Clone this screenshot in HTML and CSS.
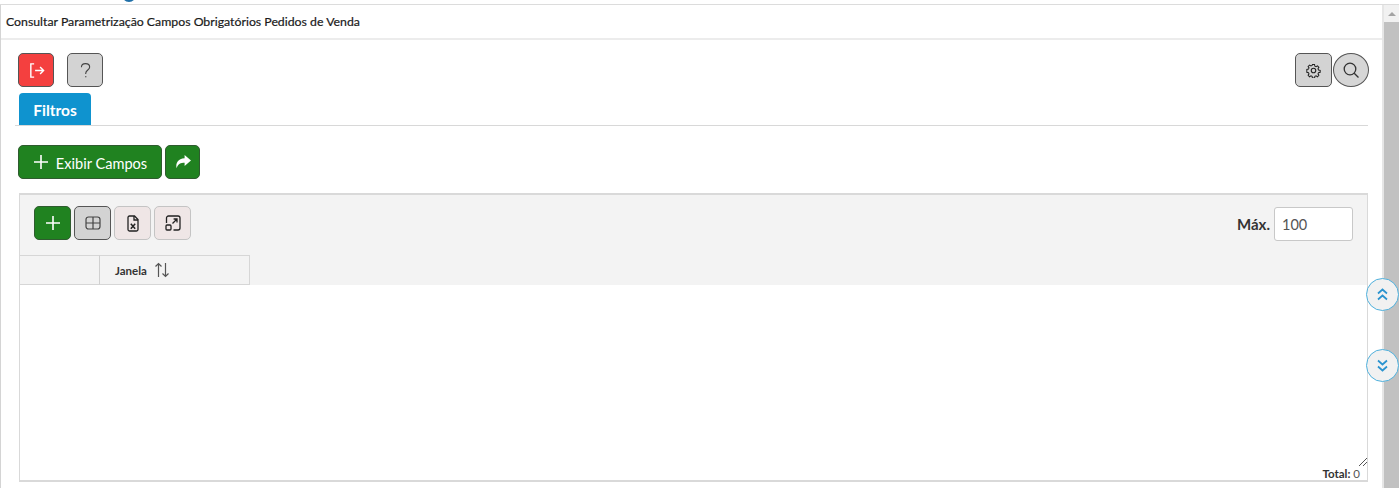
FILE: index.html
```html
<!DOCTYPE html>
<html lang="pt-BR">
<head>
  <meta charset="UTF-8">
  <title>Consultar Parametrização Campos Obrigatórios Pedidos de Venda</title>
  <link rel="stylesheet" href="styles.css">
</head>
<body>

<div class="page">
  <div class="top-strip"><span class="logo-arc"></span></div>
  <div class="shell">
    <div class="window">
      <div class="title-bar">Consultar Parametrização Campos Obrigatórios Pedidos de Venda</div>
      <div class="content">
        <div class="toolbar">
          <button class="btn btn-red" type="button">
            <svg width="17" height="17" viewBox="0 0 18 18" fill="none" stroke="currentColor" stroke-width="1.500"><path d="M6.500 2H3v14h3.500"/><path d="M7.500 9h9M12.800 5.300 16.500 9l-3.700 3.700"/></svg>
          </button>
          <button class="btn btn-gray" type="button">
            <svg width="11" height="17" viewBox="0 0 14 20" fill="none" stroke="#444" stroke-width="1.400"><path d="M1.800 6C1.800 3 4 1.200 7 1.200c3.200 0 5.300 2 5.300 4.500 0 3.600-5 3.700-5 7.800v1"/><path d="M7.300 17.200v1.500" stroke-width="1.700"/></svg>
          </button>
          <div class="toolbar-right">
            <button class="btn btn-gray btn-gear" type="button">
              <svg width="15" height="15" viewBox="0 0 16 16" fill="none" stroke="#222" stroke-width="1.200"><circle cx="8" cy="8" r="2.400"/><path d="M6.800 1.200h2.400l.4 1.900 1.300.6 1.700-1 1.600 1.700-1 1.600.6 1.400 1.900.4v2.300l-1.900.4-.6 1.400 1 1.600-1.600 1.700-1.700-1-1.300.6-.4 1.900H6.800l-.4-1.900-1.300-.6-1.700 1-1.600-1.700 1-1.600-.6-1.400-1.900-.4V6.800l1.900-.4.600-1.400-1-1.600 1.600-1.700 1.700 1 1.300-.6z" transform="translate(.6 .6) scale(.925)"/></svg>
            </button>
            <button class="btn btn-gray btn-round" type="button">
              <svg width="18" height="18" viewBox="0 0 18 18" fill="none" stroke="#333" stroke-width="1.300"><circle cx="8" cy="8" r="5.800"/><path d="m12.200 12.200 4.300 4.300"/></svg>
            </button>
          </div>
        </div>

        <div class="tabs">
          <div class="tab-active">Filtros</div>
        </div>

        <div class="actions">
          <button class="btn btn-green btn-show" type="button">
            <svg width="16" height="16" viewBox="0 0 16 16" stroke="currentColor" stroke-width="1.600"><path d="M8 1v14M1 8h14"/></svg>
            <span class="btn-label">Exibir Campos</span>
          </button>
          <button class="btn btn-green btn-share" type="button">
            <svg width="16" height="14" viewBox="0 0 16 14" fill="currentColor"><path d="M9.600 0 16 5.400l-6.400 5.500V7.700C5.800 7.700 3 8.600 1.600 13.200.4 8 3 3.600 9.600 3.200z"/></svg>
          </button>
        </div>

        <div class="grid-panel">
          <div class="grid-head">
            <div class="grid-tools">
              <button class="btn btn-green" type="button">
                <svg width="16" height="16" viewBox="0 0 16 16" stroke="currentColor" stroke-width="1.600"><path d="M8 1v14M1 8h14"/></svg>
              </button>
              <button class="btn btn-gray" type="button">
                <svg width="16" height="14" viewBox="0 0 16 14" fill="none" stroke="#444" stroke-width="1.200"><rect x="1" y="1" width="14" height="12" rx="2.500"/><path d="M8 1v12M1 7h14"/></svg>
              </button>
              <button class="btn btn-light" type="button">
                <svg width="12" height="17" viewBox="0 0 12 17" fill="none" stroke="#222" stroke-width="1.300"><path d="M7.500 1H2.500A1.500 1.500 0 0 0 1 2.500v12A1.500 1.500 0 0 0 2.500 16h7a1.500 1.500 0 0 0 1.500-1.500V4.500z"/><path d="M7 1v4h4"/><path d="m3.800 8.800 4.400 5M8.200 8.800l-4.400 5" stroke-width="1.500"/></svg>
              </button>
              <button class="btn btn-light" type="button">
                <svg width="16" height="16" viewBox="0 0 16 16" fill="none" stroke="#222" stroke-width="1.300"><path d="M1.500 8V3A2 2 0 0 1 3.500 1h9.500a2 2 0 0 1 2 2v10a2 2 0 0 1-2 2H8.500"/><rect x="1" y="10" width="5" height="5" rx="1"/><path d="M7.500 8.500 12 4M8.600 4H12v3.400"/></svg>
              </button>
              <div class="max-box">
                <label class="max-label" for="maxRows">Máx.</label>
                <input class="max-input" type="text" id="maxRows" value="100">
              </div>
            </div>
            <div class="grid-columns">
              <div class="col-empty"></div>
              <div class="col-title">
                Janela
                <svg width="16" height="16" viewBox="0 0 16 16" fill="none" stroke="#555" stroke-width="1.200"><path d="M4.500 15V1.500M1.500 4.500l3-3 3 3M11.500 1v13.500M8.500 11.500l3 3 3-3"/></svg>
              </div>
            </div>
          </div>
          <div class="grid-body">
            <svg class="resize-grip" width="9" height="9" viewBox="0 0 9 9" stroke="#555" stroke-width="1"><path d="M1 9 9 1M5 9l4-4"/></svg>
          </div>
          <div class="grid-total"><b>Total:</b> 0</div>
        </div>
      </div>
    </div>

    <div class="scrollbar">
      <div class="scroll-arrow"></div>
      <div class="scroll-thumb"></div>
    </div>
  </div>

  <button class="scroll-btn scroll-up" type="button">
    <svg width="11" height="13" viewBox="0 0 11 13" fill="none" stroke="currentColor" stroke-width="1.700"><path d="m1 5.500 4.500-4 4.500 4M1 11.500l4.500-4 4.500 4"/></svg>
  </button>
  <button class="scroll-btn scroll-down" type="button">
    <svg width="11" height="13" viewBox="0 0 11 13" fill="none" stroke="currentColor" stroke-width="1.700"><path d="m1 1.500 4.500 4 4.500-4M1 7.500l4.500 4 4.500-4"/></svg>
  </button>
</div>

</body>
</html>
```

FILE: styles.css
```css
* {
  box-sizing: border-box;
}

html, body {
  height: 100%;
}

body {
  margin: 0;
  background-color: #fff;
  font-family: Lato, "Open Sans", sans-serif;
  color: #222;
  overflow: hidden;
}

.page {
  position: relative;
  height: 488px;
  display: flex;
  flex-direction: column;
}

.top-strip {
  height: 4px;
  padding-left: 122px;
  overflow: hidden;
}

.logo-arc {
  display: block;
  width: 14px;
  height: 14px;
  margin-top: -12px;
  border-radius: 50%;
  background-color: #1f6fa8;
}

.shell {
  flex: 1;
  display: flex;
  min-height: 0;
  border-top: 1px solid #dcdcdc;
}

.window {
  flex: 1;
  min-width: 0;
  border-left: 1px solid #d4d4d4;
  border-right: 2px solid #e6e6e6;
}

.title-bar {
  height: 35px;
  padding: 0 5px;
  display: flex;
  align-items: center;
  font-size: 12.3px;
  -webkit-text-stroke: 0.2px #1a1a1a;
  border-bottom: 2px solid #ececec;
  color: #1a1a1a;
}

.content {
  padding: 13px 14px 0 14px;
}

.btn {
  width: 37px;
  height: 34px;
  padding: 0;
  display: inline-flex;
  align-items: center;
  justify-content: center;
  border: 1px solid #555;
  border-radius: 5px;
  font-family: inherit;
  cursor: pointer;
}

.btn-red {
  background-color: #f4403f;
  color: #fff;
}

.btn-gray {
  background-color: #d3d3d3;
  color: #333;
}

.btn-light {
  background-color: #efe6e6;
  border-color: #c4c4c4;
}

.btn-green {
  background-color: #208220;
  border-color: #2f5b2f;
  color: #fff;
}

.btn-round {
  width: 36px;
  border-radius: 50%;
  background-color: #d6d6d6;
}

.toolbar {
  display: flex;
  gap: 13px;
  padding-left: 3px;
}

.toolbar .btn {
  width: 36px;
}

.toolbar .btn-gear {
  width: 37px;
}

.toolbar-right {
  margin-left: auto;
  margin-right: -1px;
  display: flex;
  gap: 1px;
}

.tabs {
  margin-top: 6px;
  height: 33px;
  padding-left: 4px;
  border-bottom: 1px solid #d8d8d8;
}

.tab-active {
  width: 72px;
  height: 32px;
  padding-top: 2px;
  display: flex;
  align-items: center;
  justify-content: center;
  background-color: #0f93cf;
  border-radius: 4px 4px 0 0;
  color: #fff;
  font-size: 15.5px;
  font-weight: 700;
}

.actions {
  margin-top: 19px;
  padding-left: 3px;
  display: flex;
  gap: 3px;
}

.btn-show {
  width: 144px;
  gap: 7px;
  font-size: 14.6px;
}

.btn-label {
  padding-top: 2px;
}

.btn-share {
  width: 35px;
}

.grid-panel {
  margin: 14px 0 0 4px;
  width: 1349px;
  height: 289px;
  border: 2px solid #d9d9d9;
  border-right-width: 1px;
  border-left-width: 1px;
  display: flex;
  flex-direction: column;
}

.grid-head {
  height: 90px;
  background-color: #f3f3f3;
}

.grid-tools {
  height: 60px;
  padding: 11px 14px 0 14px;
  display: flex;
  gap: 3px;
}

.max-box {
  margin-left: auto;
  display: flex;
  align-items: center;
  gap: 4px;
  height: 34px;
  margin-top: 1px;
}

.max-label {
  font-size: 15px;
  font-weight: 700;
  color: #333;
}

.max-input {
  width: 79px;
  height: 34px;
  padding: 0 7px;
  border: 1px solid #c8c8c8;
  border-radius: 3px;
  background-color: #fff;
  font-family: inherit;
  font-size: 14.5px;
  color: #555;
}

.grid-columns {
  display: flex;
  height: 30px;
}

.col-empty {
  width: 80px;
  border-top: 1px solid #d6d6d6;
  border-bottom: 1px solid #d6d6d6;
  border-right: 1px solid #d0d0d0;
}

.col-title {
  width: 150px;
  padding-left: 15px;
  display: flex;
  align-items: center;
  gap: 7px;
  border-top: 1px solid #d6d6d6;
  border-bottom: 1px solid #d6d6d6;
  border-right: 1px solid #d6d6d6;
  font-size: 11.5px;
  font-weight: 700;
  color: #333;
}

.grid-body {
  flex: 1;
  position: relative;
}

.resize-grip {
  position: absolute;
  right: 0;
  bottom: 2px;
}

.grid-total {
  height: 12px;
  padding-right: 7px;
  line-height: 12px;
  text-align: right;
  font-size: 11.5px;
  color: #555;
}

.grid-total b {
  color: #333;
}

.scrollbar {
  width: 15px;
  background-color: #f1f1f1;
  display: flex;
  flex-direction: column;
}

.scroll-arrow {
  width: 0;
  height: 0;
  margin: 7px auto 6px auto;
  border-left: 4px solid transparent;
  border-right: 4px solid transparent;
  border-bottom: 4px solid #a3a3a3;
}

.scroll-thumb {
  flex: 1;
  background-color: #c1c1c1;
}

.scroll-btn {
  position: absolute;
  left: 1366px;
  width: 33px;
  height: 33px;
  padding: 0;
  display: flex;
  align-items: center;
  justify-content: center;
  border: 1px solid #4fb0dc;
  border-radius: 50%;
  background-color: #f1f1f1;
  color: #2a93cf;
}

.scroll-up {
  top: 278px;
}

.scroll-down {
  top: 349px;
}
```
